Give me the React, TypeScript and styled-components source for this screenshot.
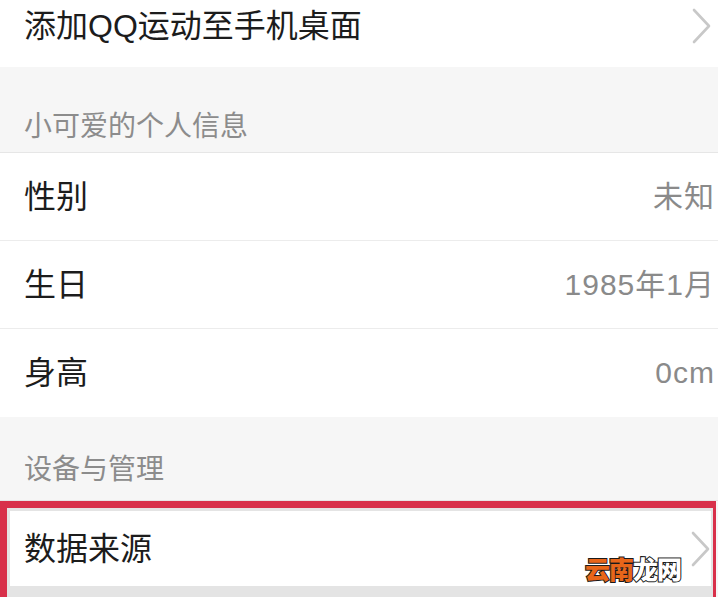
import React from "react";
import styled, { createGlobalStyle } from "styled-components";

const Global = createGlobalStyle`
  html, body { margin: 0; padding: 0; background: #f6f6f6; }
  body { font-family: "Liberation Sans", "Noto Sans CJK SC", sans-serif; }
  #root { width: 718px; height: 597px; overflow: hidden; }
`;

const Page = styled.div`
  width: 718px;
  height: 597px;
  display: flex;
  flex-direction: column;
  background: #f6f6f6;
  position: relative;
  overflow: hidden;
`;

const Row = styled.div<{ $h: number; $pb?: number; $divider?: boolean }>`
  height: ${(p) => p.$h}px;
  flex: none;
  box-sizing: border-box;
  padding: 0 6px ${(p) => p.$pb ?? 0}px 24px;
  display: flex;
  align-items: center;
  justify-content: space-between;
  background: #ffffff;
  border-bottom: ${(p) => (p.$divider ? "1px solid #ececec" : "none")};
`;

const Label = styled.span`
  font-family: "Liberation Sans", "Noto Sans CJK SC", sans-serif;
  font-size: 32px;
  line-height: 40px;
  color: #1c1c1c;
`;

const Value = styled.span`
  font-family: "Liberation Sans", "Noto Sans CJK SC", sans-serif;
  font-size: 30px;
  line-height: 40px;
  color: #8a8a8a;
  letter-spacing: 1px;
  margin-right: -3px;
`;

const SectionHeader = styled.div<{ $h: number; $pb: number }>`
  height: ${(p) => p.$h}px;
  flex: none;
  box-sizing: border-box;
  padding: 0 24px ${(p) => p.$pb}px;
  display: flex;
  align-items: flex-end;
  background: #f6f6f6;
  border-bottom: 1px solid #e6e6e6;
  font-family: "Noto Sans CJK SC", sans-serif;
  font-size: 28px;
  line-height: 30px;
  color: #8c8c8c;
`;

const Highlight = styled.div`
  flex: none;
  border-style: solid;
  border-color: #d8304a;
  border-width: 7px 3px 0 7px;
  margin-right: 2px;
  background: #e4e4e4;
  padding: 3px 2px 0 3px;
  height: 97px;
  box-sizing: border-box;
  display: flex;
  flex-direction: column;
`;

const BoxedRow = styled.div`
  height: 75px;
  flex: none;
  box-sizing: border-box;
  padding: 0 0 0 14px;
  display: flex;
  align-items: center;
  justify-content: space-between;
  background: #ffffff;
`;

const Chevron = styled.svg`
  width: 20px;
  height: 36px;
  flex: none;
`;

const Watermark = styled.div`
  position: absolute;
  left: 585px;
  top: 552px;
  font-size: 25px;
  font-weight: 900;
  line-height: 32px;
  letter-spacing: -1px;
  font-family: "Noto Sans CJK SC", sans-serif;
  -webkit-text-stroke: 2px #1a1a1a;
  paint-order: stroke fill;
`;

const Mark = styled.span<{ $c: string }>`
  color: ${(p) => p.$c};
`;

const Arrow = () => (
  <Chevron viewBox="0 0 20 36">
    <path d="M2 2 L17 18 L2 34" fill="none" stroke="#c8c8c8" strokeWidth="2.6" strokeLinecap="round" strokeLinejoin="round" />
  </Chevron>
);

export default function App() {
  return (
    <>
      <Global />
      <Page>
        <Row $h={67} $pb={16}>
          <Label>添加QQ运动至手机桌面</Label>
          <Arrow />
        </Row>
        <SectionHeader $h={86} $pb={13}>小可爱的个人信息</SectionHeader>
        <Row $h={88} $divider>
          <Label>性别</Label>
          <Value>未知</Value>
        </Row>
        <Row $h={88} $divider>
          <Label>生日</Label>
          <Value>1985年1月</Value>
        </Row>
        <Row $h={88}>
          <Label>身高</Label>
          <Value>0cm</Value>
        </Row>
        <SectionHeader $h={84} $pb={18}>设备与管理</SectionHeader>
        <Highlight>
          <BoxedRow>
            <Label>数据来源</Label>
            <Arrow />
          </BoxedRow>
        </Highlight>
        <Watermark>
          <Mark $c="#e8661a">云南</Mark>
          <Mark $c="#ffffff">龙网</Mark>
        </Watermark>
      </Page>
    </>
  );
}
